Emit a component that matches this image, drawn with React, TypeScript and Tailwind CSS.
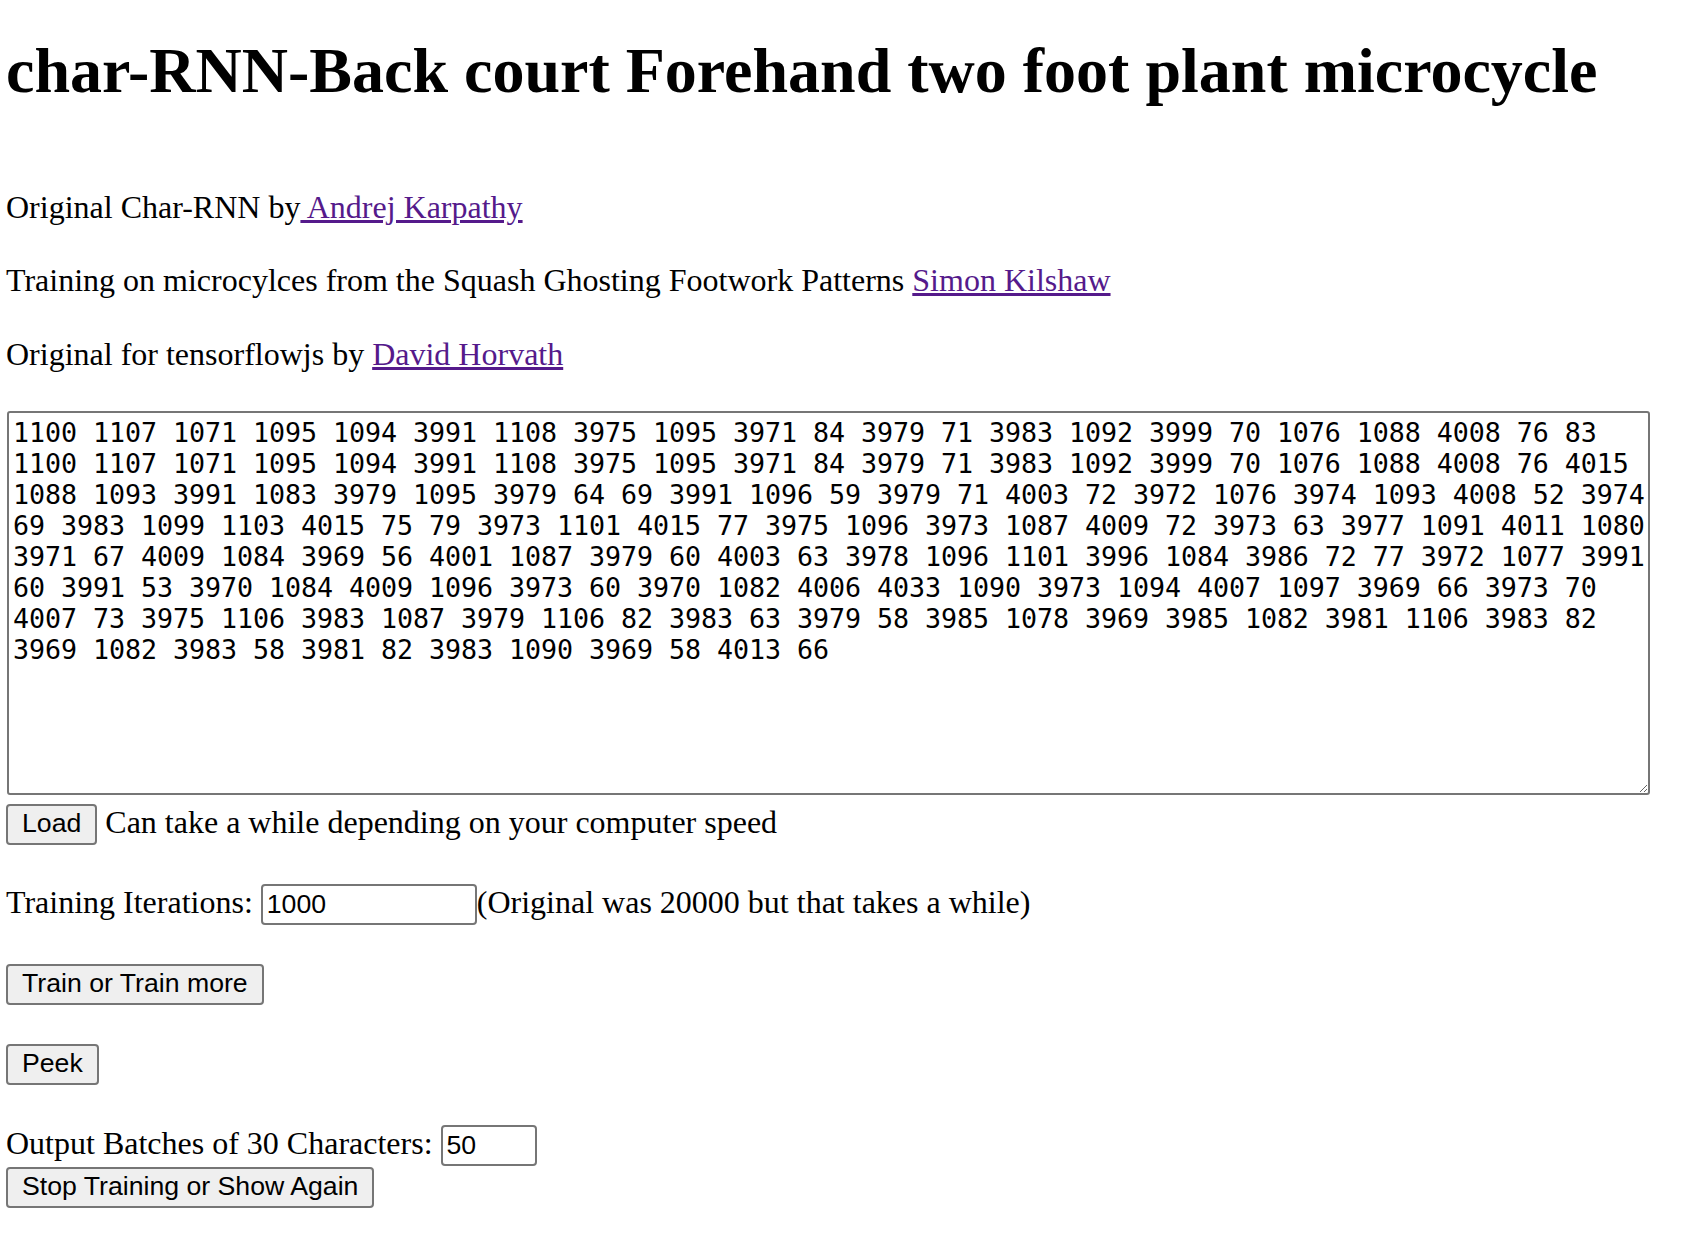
import React, { useState } from "react";

const sequence = [
  "1100 1107 1071 1095 1094 3991 1108 3975 1095 3971 84 3979 71 3983 1092 3999 70 1076 1088 4008 76 83",
  "1100 1107 1071 1095 1094 3991 1108 3975 1095 3971 84 3979 71 3983 1092 3999 70 1076 1088 4008 76 4015",
  "1088 1093 3991 1083 3979 1095 3979 64 69 3991 1096 59 3979 71 4003 72 3972 1076 3974 1093 4008 52 3974",
  "69 3983 1099 1103 4015 75 79 3973 1101 4015 77 3975 1096 3973 1087 4009 72 3973 63 3977 1091 4011 1080",
  "3971 67 4009 1084 3969 56 4001 1087 3979 60 4003 63 3978 1096 1101 3996 1084 3986 72 77 3972 1077 3991",
  "60 3991 53 3970 1084 4009 1096 3973 60 3970 1082 4006 4033 1090 3973 1094 4007 1097 3969 66 3973 70",
  "4007 73 3975 1106 3983 1087 3979 1106 82 3983 63 3979 58 3985 1078 3969 3985 1082 3981 1106 3983 82",
  "3969 1082 3983 58 3981 82 3983 1090 3969 58 4013 66",
].join("\n");

const btn =
  "h-[41px] px-[14px] pb-[3px] bg-[#efefef] border-2 border-[#767676] rounded-[4px] text-black text-[26.67px] leading-[30px] font-['Liberation_Sans',Arial,sans-serif] flex items-center";

const field =
  "h-[41px] px-[4px] bg-white border-2 border-[#767676] rounded-[4px] text-black text-[26.67px] font-['Liberation_Sans',Arial,sans-serif] outline-none";

const App = () => {
  const [text, setText] = useState(sequence);
  const [iterations, setIterations] = useState("1000");
  const [batches, setBatches] = useState("50");

  return (
    <div className="min-h-screen bg-white text-black pl-[6px] font-['Liberation_Serif','Times_New_Roman',serif] text-[32px] leading-[37px]">
      <h1 className="pt-[34px] text-[64px] leading-[74px] font-bold">
        char-RNN-Back court Forehand two foot plant microcycle
      </h1>

      <p className="mt-[81px]">
        Original Char-RNN by
        <a href="#" className="text-[#551a8b] underline">
          {" Andrej Karpathy"}
        </a>
      </p>
      <p className="mt-[36px]">
        Training on microcylces from the Squash Ghosting Footwork Patterns{" "}
        <a href="#" className="text-[#551a8b] underline">
          Simon Kilshaw
        </a>
      </p>
      <p className="mt-[37px]">
        Original for tensorflowjs by{" "}
        <a href="#" className="text-[#551a8b] underline">
          David Horvath
        </a>
      </p>

      <textarea
        value={text}
        onChange={(e) => setText(e.target.value)}
        wrap="off"
        className="block mt-[38px] ml-[1px] w-[1643px] h-[384px] pt-[4px] pb-[2px] pl-[4px] pr-[2px] border-2 border-[#767676] rounded-[3px] overflow-hidden whitespace-pre font-['DejaVu_Sans_Mono',monospace] text-[26.67px] leading-[31px] tracking-[-0.05px] text-black outline-none"
      />

      <div className="mt-[9px] flex items-start">
        <button className={btn}>Load</button>
        <span className="ml-[8px]">Can take a while depending on your computer speed</span>
      </div>

      <div className="mt-[39px] flex items-start">
        <span className="mr-[8px]">Training Iterations:</span>
        <input
          type="text"
          value={iterations}
          onChange={(e) => setIterations(e.target.value)}
          className={`${field} w-[216px]`}
        />
        <span>(Original was 20000 but that takes a while)</span>
      </div>

      <div className="mt-[39px] flex">
        <button className={btn}>Train or Train more</button>
      </div>

      <div className="mt-[39px] flex">
        <button className={btn}>Peek</button>
      </div>

      <div className="mt-[40px] flex items-start">
        <span className="mr-[8px]">Output Batches of 30 Characters:</span>
        <input
          type="text"
          value={batches}
          onChange={(e) => setBatches(e.target.value)}
          className={`${field} w-[96px]`}
        />
      </div>

      <div className="mt-[1px] flex">
        <button className={btn}>Stop Training or Show Again</button>
      </div>
    </div>
  );
};

export default App;
